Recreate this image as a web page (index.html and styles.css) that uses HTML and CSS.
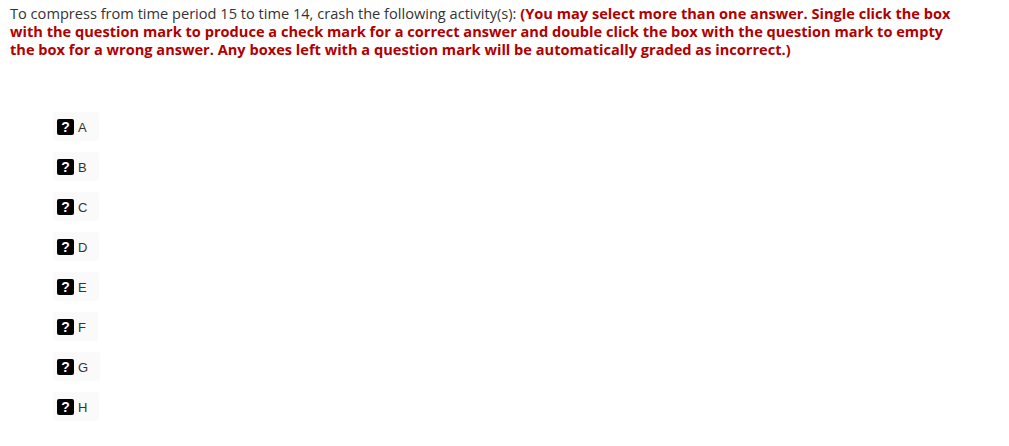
FILE: index.html
```html
<!DOCTYPE html>
<html>
<head>
<meta charset="utf-8">
<link rel="stylesheet" href="styles.css">
</head>
<body>
<div class="page">
  <p class="prompt">To compress from time period 15 to time 14, crash the following activity(s): <strong class="hint">(You may select more than one answer. Single click the box with the question mark to produce a check mark for a correct answer and double click the box with the question mark to empty the box for a wrong answer. Any boxes left with a question mark will be automatically graded as incorrect.)</strong></p>
  <ul class="choices">
    <li class="choice"><span class="qbox">?</span><span class="label">A</span></li>
    <li class="choice"><span class="qbox">?</span><span class="label">B</span></li>
    <li class="choice"><span class="qbox">?</span><span class="label">C</span></li>
    <li class="choice"><span class="qbox">?</span><span class="label">D</span></li>
    <li class="choice"><span class="qbox">?</span><span class="label">E</span></li>
    <li class="choice"><span class="qbox">?</span><span class="label">F</span></li>
    <li class="choice"><span class="qbox">?</span><span class="label">G</span></li>
    <li class="choice"><span class="qbox">?</span><span class="label">H</span></li>
  </ul>
</div>
</body>
</html>
```

FILE: styles.css
```css
html, body { margin: 0; padding: 0; background: #fff; }
.page { padding: 4px 10px 0 10px; font-family: "Open Sans", "Lato", sans-serif; }
.prompt {
  margin: 0;
  width: 945px;
  font-size: 14.6px;
  line-height: 18px;
  color: #333;
}
.hint { color: #b20000; font-weight: 700; }
.choices {
  list-style: none;
  margin: 54px 0 0 43px;
  padding: 0;
  display: flex;
  flex-direction: column;
  align-items: flex-start;
  gap: 11px;
}
.choice {
  display: flex;
  align-items: center;
  gap: 4px;
  height: 29px;
  padding: 1px 12px 0 4px;
  box-sizing: border-box;
  background: #fafafa;
  border-radius: 3px;
}
.qbox {
  width: 17px;
  height: 16px;
  background: #000;
  color: #fff;
  border-radius: 2px;
  display: flex;
  align-items: center;
  justify-content: center;
  font-family: "Liberation Sans", Arial, sans-serif;
  font-weight: 700;
  font-size: 14px;
  line-height: 1;
}
.label {
  font-family: "Liberation Sans", Arial, sans-serif;
  font-size: 13px;
  color: #333;
}
```
